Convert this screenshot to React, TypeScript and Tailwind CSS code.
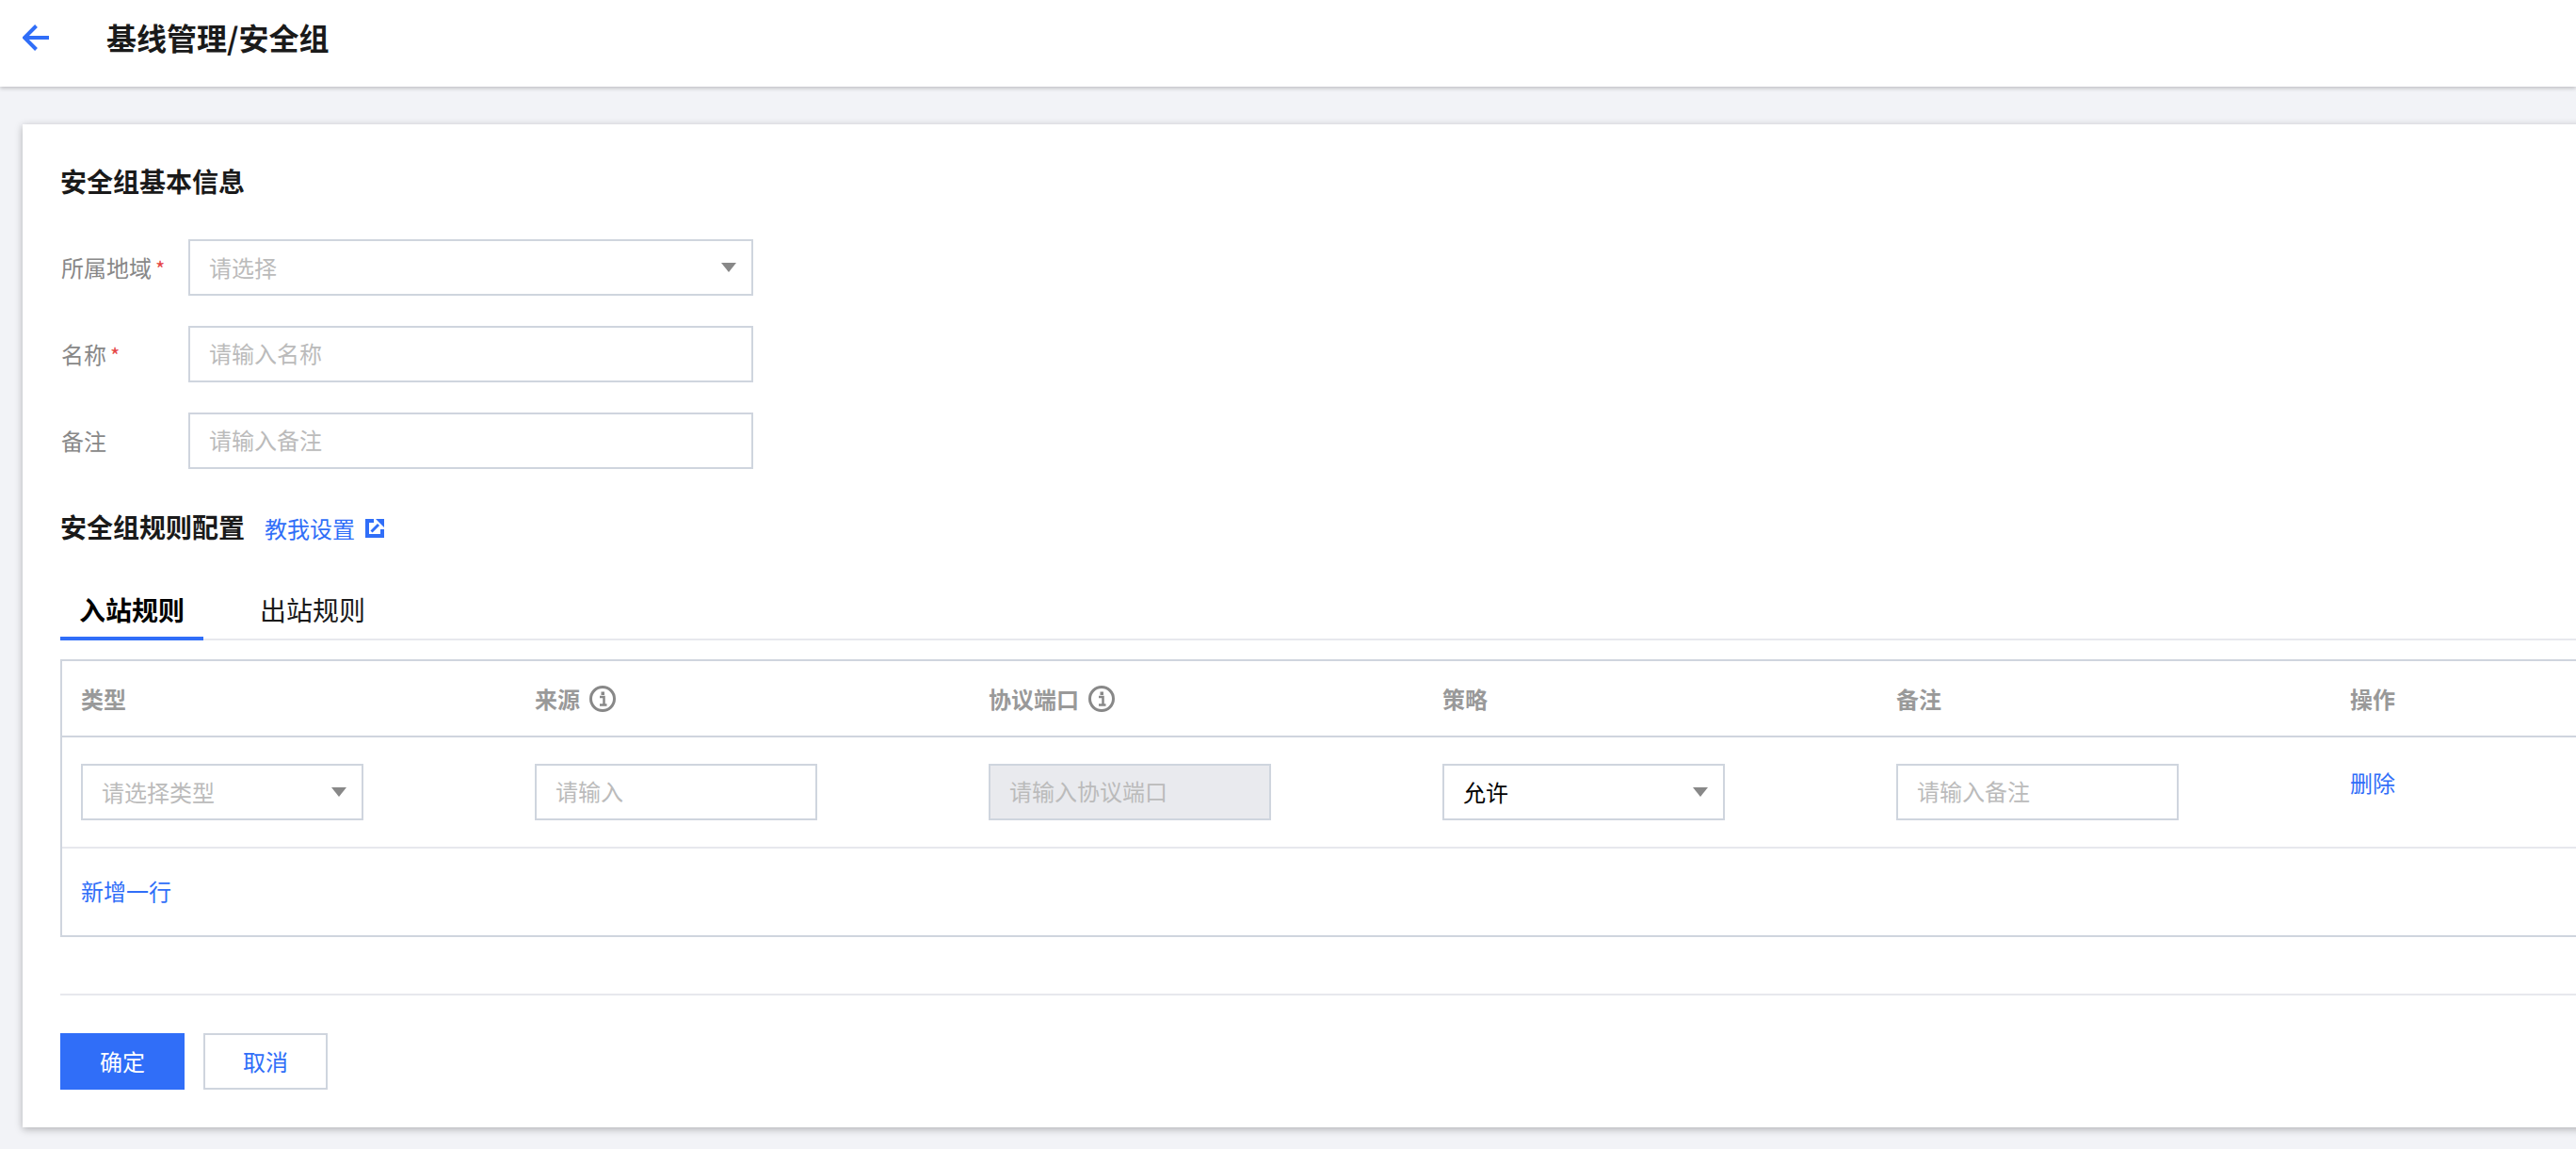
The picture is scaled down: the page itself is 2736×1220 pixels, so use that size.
const fontStack = "font-['Noto_Sans_CJK_SC','Liberation_Sans',sans-serif]";

const columns = [
  { label: "类型" },
  { label: "来源", info: true },
  { label: "协议端口", info: true },
  { label: "策略" },
  { label: "备注" },
  { label: "操作" },
];

function Caret() {
  return (
    <svg width="16" height="10" viewBox="0 0 16 10" className="shrink-0">
      <path d="M0 0h16L8 10z" fill="#888888" />
    </svg>
  );
}

function InfoIcon() {
  return (
    <svg width="28" height="28" viewBox="0 0 28 28" className="ml-[10px] shrink-0" fill="none">
      <circle cx="14" cy="14" r="12.5" stroke="#888888" strokeWidth="3" />
      <rect x="12.5" y="6.5" width="3.5" height="3.5" fill="#888888" />
      <path d="M11 12h4.5v8M11 20.5h7.5" stroke="#888888" strokeWidth="2.5" />
    </svg>
  );
}

function ExternalIcon() {
  return (
    <svg width="20" height="20" viewBox="0 0 20 20" className="ml-[11px] shrink-0" fill="none">
      <path d="M9 2H2v16h16v-7" stroke="#306ef8" strokeWidth="4" />
      <path d="M6.500 13.500 14 6" stroke="#306ef8" strokeWidth="3" />
      <path d="M11 0h9v9z" fill="#306ef8" />
    </svg>
  );
}

function TextInput({ placeholder, w = "w-[600px]", disabled = false }: { placeholder: string; w?: string; disabled?: boolean }) {
  return (
    <input
      placeholder={placeholder}
      disabled={disabled}
      className={`${w} h-[60px] border-2 border-[#cfd5de] px-5 pb-1 text-[24px] text-black outline-none placeholder:text-[#bbbbbb] ${disabled ? "bg-[#e9eaee]" : "bg-white"}`}
    />
  );
}

function SelectBox({ text, placeholder = false, w = "w-[600px]" }: { text: string; placeholder?: boolean; w?: string }) {
  return (
    <div className={`${w} flex h-[60px] items-center justify-between border-2 border-[#cfd5de] bg-white pl-5 pr-4 text-[24px] ${placeholder ? "text-[#bbbbbb]" : "text-black"}`}>
      <span>{text}</span>
      <Caret />
    </div>
  );
}

function FormRow({ label, required = false, children }: { label: string; required?: boolean; children: React.ReactNode }) {
  return (
    <div className="flex items-center">
      <div className="flex w-[136px] items-center pl-px text-[24px] text-[#888888]">
        <span>{label}</span>
        {required && <span className="ml-1 text-[22px] leading-none text-[#e54545]">*</span>}
      </div>
      {children}
    </div>
  );
}

export default function App() {
  return (
    <div className={`${fontStack} h-[1220px] w-full overflow-hidden bg-[#f2f3f7]`}>
      {/* Top bar */}
      <header className="flex h-[92px] items-start bg-white pl-6 pt-[26px] shadow-[0_2px_4px_rgba(0,0,0,0.2)]">
        <svg width="28" height="28" viewBox="0 0 28 28" fill="none" className="shrink-0">
          <path d="M28 14H3M14.500 1.500 2 14l12.500 12.500" stroke="#306ef8" strokeWidth="4" />
        </svg>
        <h1 className="ml-[61px] text-[32px] font-bold leading-[26px] text-[#1a1a1a]">基线管理/安全组</h1>
      </header>

      <main className="pl-6 pt-10">
        <div className="w-[2900px] bg-white pb-10 pl-10 pt-10 shadow-[0_2px_8px_rgba(0,0,0,0.28)]">
          <h2 className="pb-[2px] text-[28px] font-bold leading-[40px] text-[#1a1a1a]">安全组基本信息</h2>

          <div className="mt-10 flex flex-col gap-8">
            <FormRow label="所属地域" required>
              <SelectBox text="请选择" placeholder />
            </FormRow>
            <FormRow label="名称" required>
              <TextInput placeholder="请输入名称" />
            </FormRow>
            <FormRow label="备注">
              <TextInput placeholder="请输入备注" />
            </FormRow>
          </div>

          <div className="mt-10 flex h-[42px] items-center">
            <h2 className="text-[28px] font-bold leading-[42px] text-[#1a1a1a]">安全组规则配置</h2>
            <a className="ml-[21px] mt-[3px] flex items-center text-[24px] text-[#306ef8]">
              教我设置
              <ExternalIcon />
            </a>
          </div>

          {/* Tabs */}
          <div className="relative mt-10 flex h-[60px] gap-[42px] border-b-2 border-[#e7e8ed]">
            <div className="relative -mb-[2px] flex h-[60px] w-[152px] items-center justify-center border-b-4 border-[#306ef8] pb-[2px] text-[28px] font-bold text-black">
              入站规则
            </div>
            <div className="flex h-[60px] w-[112px] items-center justify-center pb-[6px] text-[28px] text-[#1a1a1a]">
              <span className="ml-9 whitespace-nowrap">出站规则</span>
            </div>
          </div>

          {/* Rule table */}
          <div className="mt-5 border-2 border-[#cfd5de]">
            <div className="grid h-[81px] grid-cols-[repeat(6,482px)] border-b-2 border-[#cfd5de]">
              {columns.map((col) => (
                <div key={col.label} className="flex items-center pl-5 text-[24px] font-bold text-[#999999]">
                  <span>{col.label}</span>
                  {col.info && <InfoIcon />}
                </div>
              ))}
            </div>
            <div className="grid h-[118px] grid-cols-[repeat(6,482px)] items-start border-b-2 border-[#e7e8ed] pt-7">
              <div className="pl-5"><SelectBox text="请选择类型" placeholder w="w-[300px]" /></div>
              <div className="pl-5"><TextInput placeholder="请输入" w="w-[300px]" /></div>
              <div className="pl-5"><TextInput placeholder="请输入协议端口" w="w-[300px]" disabled /></div>
              <div className="pl-5"><SelectBox text="允许" w="w-[300px]" /></div>
              <div className="pl-5"><TextInput placeholder="请输入备注" w="w-[300px]" /></div>
              <div className="pl-5 text-[24px] leading-[40px] text-[#306ef8]">删除</div>
            </div>
            <div className="flex h-[92px] items-center pb-[2px] pl-5 text-[24px] text-[#306ef8]">新增一行</div>
          </div>

          <div className="mt-[60px] h-[2px] bg-[#e7e8ed]" />

          <div className="mt-10 flex gap-5">
            <button className="h-[60px] w-[132px] bg-[#306ef8] text-[24px] text-white">确定</button>
            <button className="h-[60px] w-[132px] border-2 border-[#cfd5de] bg-white text-[24px] text-[#306ef8]">取消</button>
          </div>
        </div>
      </main>
    </div>
  );
}
